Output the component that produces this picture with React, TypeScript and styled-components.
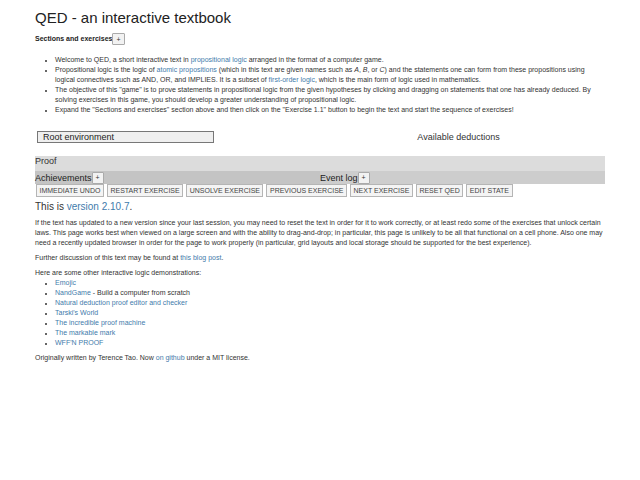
import React from "react";
import styled, { createGlobalStyle } from "styled-components";

const GlobalStyle = createGlobalStyle`
  body {
    margin: 0;
    background: #fff;
    font-family: "Liberation Sans", Arial, sans-serif;
    color: #333;
  }
`;

const Page = styled.div`
  padding: 8px 35px 20px;
  font-size: 7px;
  line-height: 10px;
`;

const Title = styled.h1`
  font-size: 15px;
  font-weight: normal;
  line-height: 20px;
  margin: 0 0 5px;
  color: #222;
`;

const SectionHead = styled.div`
  display: flex;
  align-items: center;
  font-weight: bold;
  color: #222;
  height: 12px;
`;

const SmallButton = styled.button`
  font-family: inherit;
  font-size: 7px;
  line-height: 9px;
  padding: 0 3px;
  margin: 0;
  height: 12px;
  border: 1px solid #aaa;
  border-radius: 1px;
  background: #f2f2f2;
  color: #333;
`;

const Intro = styled.ul`
  margin: 10px 0 0;
  padding-left: 20px;
  list-style: disc;
`;

const Item = styled.li`
  &::marker {
    font-size: 6px;
  }
`;

const Link = styled.a`
  color: #3f7bab;
  text-decoration: none;
`;

const EnvRow = styled.div`
  display: grid;
  grid-template-columns: 285px 1fr;
  margin-top: 16px;
  align-items: center;
`;

const EnvBox = styled.div`
  margin-left: 2px;
  width: 170px;
  height: 10px;
  border: 1px solid #777;
  background: #efefef;
  font-size: 9px;
  line-height: 10px;
  padding: 0 0 0 5px;
  color: #222;
`;

const Deductions = styled.div`
  font-size: 9px;
  color: #333;
  text-align: center;
  padding-right: 8px;
`;

const ProofBar = styled.div`
  margin-top: 13px;
  height: 15px;
  background: #dcdcdc;
  font-size: 9px;
  line-height: 10px;
  color: #333;
`;

const LogRow = styled.div`
  display: grid;
  grid-template-columns: 285px 1fr;
  height: 13px;
`;

const LogCell = styled.div<{ $shade: string }>`
  display: flex;
  align-items: center;
  background: ${({ $shade }) => $shade};
  font-size: 9px;
  color: #222;
`;

const Actions = styled.div`
  display: flex;
  gap: 3px;
  padding: 0 0 0 1px;
`;

const ActionButton = styled.button`
  font-family: inherit;
  font-size: 7px;
  line-height: 10px;
  height: 13px;
  padding: 0 2.5px;
  margin: 0;
  border: 1px solid #b5b5b5;
  background: #f4f4f4;
  color: #444;
  text-transform: uppercase;
`;

const Version = styled.div`
  font-size: 10px;
  line-height: 12px;
  margin-top: 4px;
  color: #333;
`;

const Para = styled.p`
  margin: 5px 0 0;
`;

const Demos = styled.ul`
  margin: 0;
  padding-left: 20px;
`;

const demos: { name: string; note?: string }[] = [
  { name: "Emojic" },
  { name: "NandGame", note: " - Build a computer from scratch" },
  { name: "Natural deduction proof editor and checker" },
  { name: "Tarski's World" },
  { name: "The incredible proof machine" },
  { name: "The markable mark" },
  { name: "WFF'N PROOF" },
];

const actions = [
  "Immediate undo",
  "Restart exercise",
  "Unsolve exercise",
  "Previous exercise",
  "Next exercise",
  "Reset QED",
  "Edit state",
];

export default function App() {
  return (
    <Page>
      <GlobalStyle />
      <Title>QED - an interactive textbook</Title>
      <SectionHead>
        Sections and exercises<SmallButton>+</SmallButton>
      </SectionHead>

      <Intro>
        <Item>
          Welcome to QED, a short interactive text in <Link href="#">propositional logic</Link> arranged in the
          format of a computer game.
        </Item>
        <Item>
          Propositional logic is the logic of <Link href="#">atomic propositions</Link> (which in this text are
          given names such as <i>A</i>, <i>B</i>, or <i>C</i>) and the statements one can form from these
          propositions using logical connectives such as AND, OR, and IMPLIES. It is a subset of{" "}
          <Link href="#">first-order logic</Link>, which is the main form of logic used in mathematics.
        </Item>
        <Item>
          The objective of this "game" is to prove statements in propositional logic from the given hypotheses by
          clicking and dragging on statements that one has already deduced. By solving exercises in this game, you
          should develop a greater understanding of propositional logic.
        </Item>
        <Item>
          Expand the "Sections and exercises" section above and then click on the "Exercise 1.1" button to begin the
          text and start the sequence of exercises!
        </Item>
      </Intro>

      <EnvRow>
        <EnvBox>Root environment</EnvBox>
        <Deductions>Available deductions</Deductions>
      </EnvRow>

      <ProofBar>Proof</ProofBar>
      <LogRow>
        <LogCell $shade="#c4c4c4">
          Achievements<SmallButton>+</SmallButton>
        </LogCell>
        <LogCell $shade="#cdcdcd">
          Event log<SmallButton>+</SmallButton>
        </LogCell>
      </LogRow>

      <Actions>
        {actions.map((a) => (
          <ActionButton key={a}>{a}</ActionButton>
        ))}
      </Actions>

      <Version>
        This is <Link href="#">version 2.10.7</Link>.
      </Version>

      <Para>
        If the text has updated to a new version since your last session, you may need to reset the text in order
        for it to work correctly, or at least redo some of the exercises that unlock certain laws. This page works
        best when viewed on a large screen and with the ability to drag-and-drop; in particular, this page is
        unlikely to be all that functional on a cell phone. Also one may need a recently updated browser in order
        for the page to work properly (in particular, grid layouts and local storage should be supported for the
        best experience).
      </Para>

      <Para>
        Further discussion of this text may be found at <Link href="#">this blog post</Link>.
      </Para>

      <Para>Here are some other interactive logic demonstrations:</Para>
      <Demos>
        {demos.map((d) => (
          <Item key={d.name}>
            <Link href="#">{d.name}</Link>
            {d.note}
          </Item>
        ))}
      </Demos>

      <Para>
        Originally written by Terence Tao. Now <Link href="#">on github</Link> under a MIT license.
      </Para>
    </Page>
  );
}
